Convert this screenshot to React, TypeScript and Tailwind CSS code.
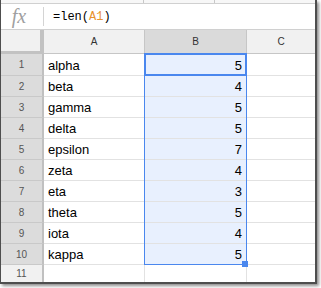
import React from "react";

const rows: [string, number][] = [
  ["alpha", 5],
  ["beta", 4],
  ["gamma", 5],
  ["delta", 5],
  ["epsilon", 7],
  ["zeta", 4],
  ["eta", 3],
  ["theta", 5],
  ["iota", 4],
  ["kappa", 5],
];

export default function App() {
  return (
    <div className="w-[321px] h-[288px] bg-white overflow-hidden">
      <div className="w-[317px] border-l border-r-2 border-b-2 border-[#4e4e4e] bg-white shadow-[2px_2px_3px_rgba(0,0,0,0.45)] font-['Liberation_Sans',Arial,sans-serif]">
        {/* top strip */}
        <div className="h-[4px] flex border-b border-[#d0d0d0] bg-[#f7f7f7]">
          <div className="w-[143px] border-r border-[#c8c8c8]" />
          <div className="w-[71px] border-r border-[#c8c8c8]" />
        </div>
        {/* formula bar */}
        <div className="h-[26px] flex items-center border-b border-[#d0d0d0]">
          <div className="w-[43px] h-[19px] flex items-center justify-center border-r border-[#d4d4d4] font-['Liberation_Serif',serif] italic text-[20px] leading-none text-[#a0a0a0]">
            <span className="-mt-[2px] -ml-[6px]">fx</span>
          </div>
          <div className="pl-[9px] font-['Liberation_Mono',monospace] text-[12px] text-black">
            =len(<span className="text-[#e8912d]">A1</span>)
          </div>
        </div>
        {/* grid */}
        <div className="relative grid grid-cols-[43px_101px_102px_68px]">
          <div className="h-[24px] bg-[#f1f1f1] border-r-4 border-b-[3px] border-[#c2c2c2]" />
          <div className="h-[24px] bg-[#f1f1f1] border-r border-b border-[#c6c6c6] flex items-center justify-center text-[10px] text-[#333]">A</div>
          <div className="h-[24px] bg-[#dadada] border-r border-b border-[#c6c6c6] flex items-center justify-center text-[10px] text-[#333]">B</div>
          <div className="h-[24px] bg-[#f1f1f1] border-b border-[#c6c6c6] flex items-center justify-center text-[10px] text-[#333]">C</div>

          {rows.map(([name, n], i) => {
            const h = i === 0 ? "h-[22px]" : "h-[21px]";
            return (
              <React.Fragment key={name}>
                <div className={`${h} bg-[#dcdcdc] border-r-2 border-r-[#c0c0c0] border-b border-b-[#c9c9c9] flex items-center justify-center text-[10px] text-[#555]`}>
                  {i + 1}
                </div>
                <div className={`${h} border-r border-b border-[#e2e2e2] flex items-end pb-[2px] pl-[4px] text-[13px] leading-[15px] text-black`}>
                  {name}
                </div>
                <div className={`${h} bg-[#e8f0fe] border-r border-b border-[#e2e2e2] flex items-end justify-end pb-[2px] pr-[4px] text-[13px] leading-[15px] text-black`}>
                  {n}
                </div>
                <div className={`${h} border-b border-[#e2e2e2]`} />
              </React.Fragment>
            );
          })}

          <div className="h-[17px] bg-[#f1f1f1] border-r-2 border-[#c0c0c0] flex items-center justify-center text-[10px] text-[#555]">11</div>
          <div className="h-[17px] border-r border-[#e2e2e2]" />
          <div className="h-[17px] border-r border-[#e2e2e2]" />
          <div className="h-[17px]" />

          {/* selection range */}
          <div className="absolute left-[143px] top-[23px] w-[103px] h-[212px] border border-[#4a87ee] pointer-events-none" />
          {/* active cell */}
          <div className="absolute left-[143px] top-[23px] w-[103px] h-[23px] border-2 border-[#4a87ee] pointer-events-none" />
          {/* fill handle */}
          <div className="absolute left-[241px] top-[231px] w-[6px] h-[6px] bg-[#4a87ee] pointer-events-none" />
        </div>
      </div>
    </div>
  );
}
